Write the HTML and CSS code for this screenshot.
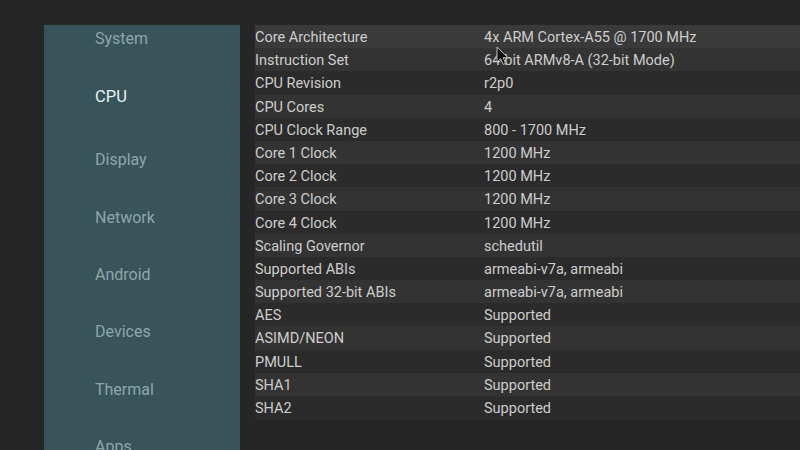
FILE: index.html
```html
<!DOCTYPE html>
<html>
<head>
<meta charset="utf-8">
<link rel="stylesheet" href="styles.css">
</head>
<body>
<div class="screen">
  <nav class="sidebar">
    <ul class="menu">
      <li class="item">System</li>
      <li class="item active">CPU</li>
      <li class="item gap">Display</li>
      <li class="item">Network</li>
      <li class="item">Android</li>
      <li class="item">Devices</li>
      <li class="item">Thermal</li>
      <li class="item">Apps</li>
    </ul>
  </nav>
  <section class="table">
    <div class="row focus"><span class="k">Core Architecture</span><span class="v">4x ARM Cortex-A55 @ 1700 MHz</span></div>
    <div class="row"><span class="k">Instruction Set</span><span class="v">64-bit ARMv8-A (32-bit Mode)</span></div>
    <div class="row"><span class="k">CPU Revision</span><span class="v">r2p0</span></div>
    <div class="row"><span class="k">CPU Cores</span><span class="v">4</span></div>
    <div class="row"><span class="k">CPU Clock Range</span><span class="v">800 - 1700 MHz</span></div>
    <div class="row"><span class="k">Core 1 Clock</span><span class="v">1200 MHz</span></div>
    <div class="row"><span class="k">Core 2 Clock</span><span class="v">1200 MHz</span></div>
    <div class="row"><span class="k">Core 3 Clock</span><span class="v">1200 MHz</span></div>
    <div class="row"><span class="k">Core 4 Clock</span><span class="v">1200 MHz</span></div>
    <div class="row"><span class="k">Scaling Governor</span><span class="v">schedutil</span></div>
    <div class="row"><span class="k">Supported ABIs</span><span class="v">armeabi-v7a, armeabi</span></div>
    <div class="row"><span class="k">Supported 32-bit ABIs</span><span class="v">armeabi-v7a, armeabi</span></div>
    <div class="row"><span class="k">AES</span><span class="v">Supported</span></div>
    <div class="row"><span class="k">ASIMD/NEON</span><span class="v">Supported</span></div>
    <div class="row"><span class="k">PMULL</span><span class="v">Supported</span></div>
    <div class="row"><span class="k">SHA1</span><span class="v">Supported</span></div>
    <div class="row"><span class="k">SHA2</span><span class="v">Supported</span></div>
  </section>
</div>
<svg class="cursor" width="14" height="20" viewBox="0 0 14 20">
  <path d="M1 1 L1 16 L4.6 12.6 L7.2 18.4 L9.6 17.3 L7.1 11.7 L12 11.7 Z" fill="#111" stroke="#bbb" stroke-width="1"/>
</svg>
</body>
</html>
```
FILE: styles.css
```css
html, body {
  margin: 0;
  padding: 0;
  background: #262626;
  width: 800px;
  height: 450px;
  overflow: hidden;
  font-family: Roboto, "Noto Sans", sans-serif;
}
.screen {
  display: flex;
  gap: 15px;
  padding: 25px 0 0 44px;
  height: 425px;
}
.sidebar {
  width: 196px;
  flex: none;
  background: #38535a;
  overflow: hidden;
}
.menu {
  list-style: none;
  margin: -14.8px 0 0 0;
  padding: 0 0 0 51px;
}
.item {
  height: 57.33px;
  line-height: 57.33px;
  font-size: 16px;
  color: #8ea6a9;
}
.item.active {
  color: #e4f2f2;
  font-size: 16.5px;
}
.item.gap {
  margin-top: 6.5px;
}
.table {
  flex: 1;
  display: flex;
  flex-direction: column;
}
.row {
  display: flex;
  height: 23.2px;
  line-height: 23.2px;
  padding-top: 1px;
  margin-bottom: -1px;
  font-size: 14.5px;
  color: #cdcdcd;
  background: #2b2b2b;
}
.row:nth-child(even) {
  background: #333333;
}
.row.focus {
  background: #3a3a3a;
}
.k {
  width: 229px;
  flex: none;
}
.v {
  flex: 1;
}
.cursor {
  position: absolute;
  left: 496px;
  top: 46px;
}
```
